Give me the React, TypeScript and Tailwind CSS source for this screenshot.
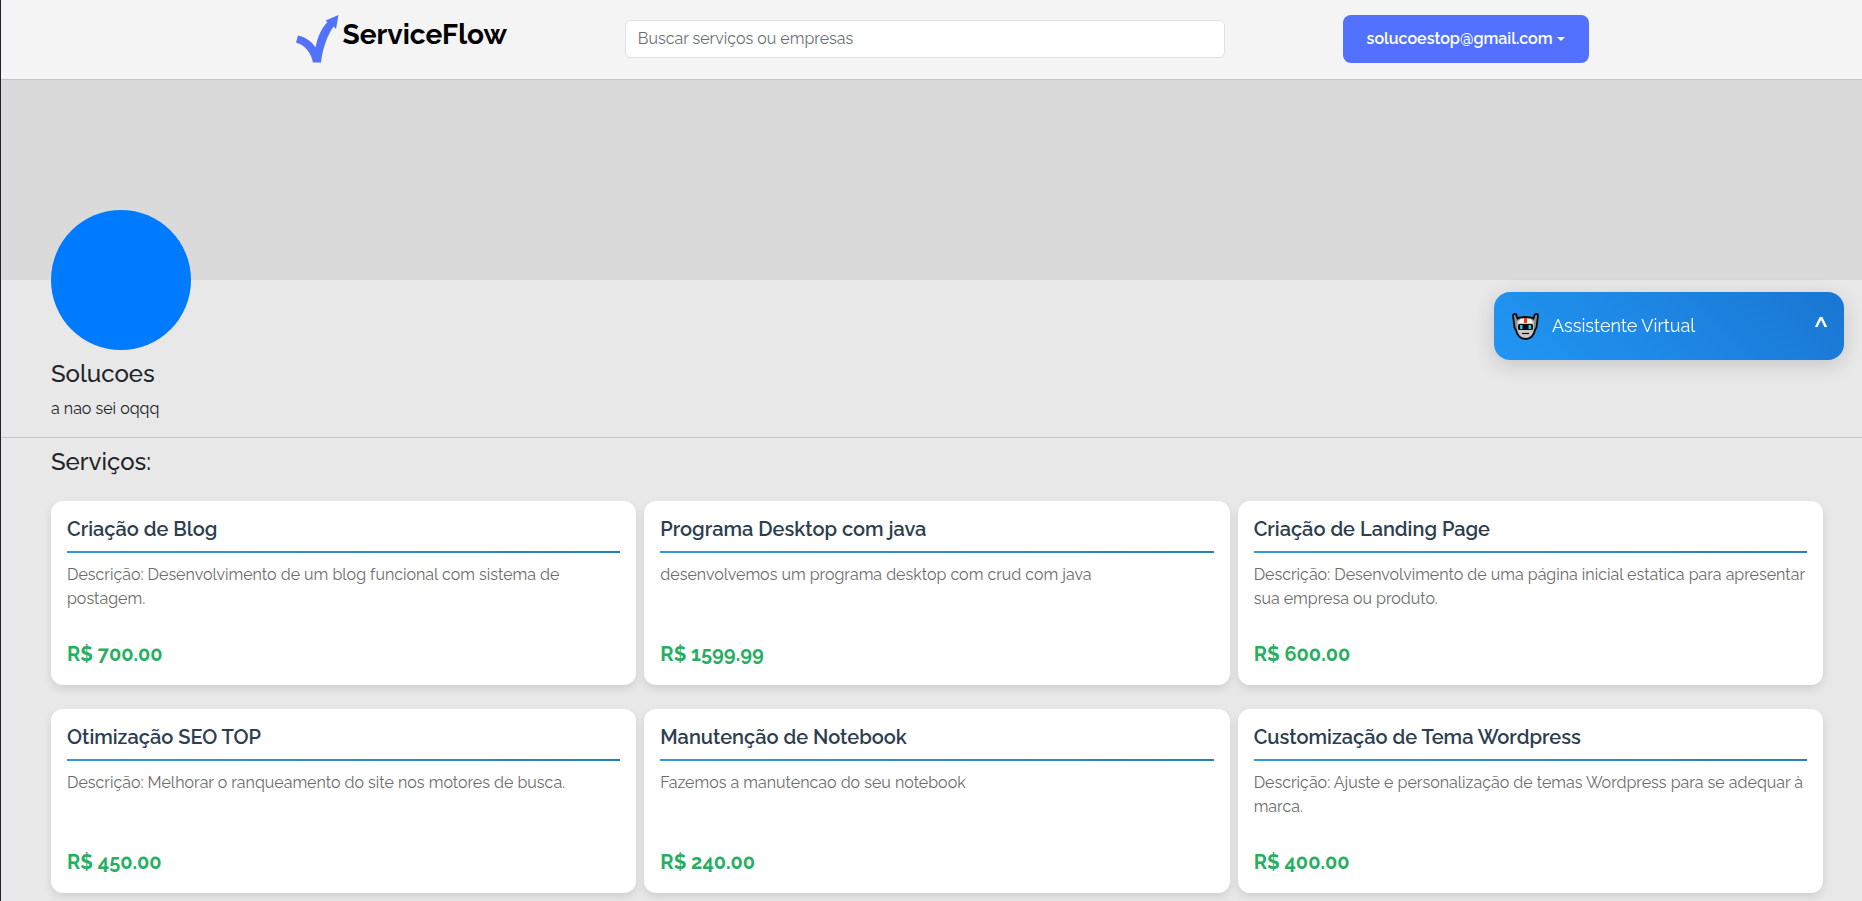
import { useState } from "react";

type Service = {
  id: number;
  name: string;
  description: string;
  price: string;
};

const services: Service[] = [
  {
    id: 1,
    name: "Criação de Blog",
    description: "Descrição: Desenvolvimento de um blog funcional com sistema de postagem.",
    price: "700.00",
  },
  {
    id: 2,
    name: "Programa Desktop com java",
    description: "desenvolvemos um programa desktop com crud com java",
    price: "1599.99",
  },
  {
    id: 3,
    name: "Criação de Landing Page",
    description:
      "Descrição: Desenvolvimento de uma página inicial estatica para apresentar sua empresa ou produto.",
    price: "600.00",
  },
  {
    id: 4,
    name: "Otimização SEO TOP",
    description: "Descrição: Melhorar o ranqueamento do site nos motores de busca.",
    price: "450.00",
  },
  {
    id: 5,
    name: "Manutenção de Notebook",
    description: "Fazemos a manutencao do seu notebook",
    price: "240.00",
  },
  {
    id: 6,
    name: "Customização de Tema Wordpress",
    description:
      "Descrição: Ajuste e personalização de temas Wordpress para se adequar à marca.",
    price: "400.00",
  },
];

function LogoMark() {
  return (
    <svg viewBox="0 0 43 48" className="h-12 w-[43px]" fill="#5271ff" aria-hidden="true">
      <path d="M2 20.500C9 22 15.500 26 19.500 32.500C21.500 22 25.500 13 31.500 7L29.500 5.500L42.500 0L40 14L37.700 11.500C32 19 26.500 33 25 47.500H17C15 37.500 9 30 0 27.500Z" />
    </svg>
  );
}

function RobotIcon() {
  return (
    <svg viewBox="0 0 27 27" className="size-[27px]" aria-hidden="true">
      <path
        d="M1 2.500C1 .5 4.500 .5 4.500 2.500L5.500 5.500C8 3.500 19 3.500 21.500 5.500L22.500 2.500C22.500 .5 26 .5 26 2.500L24.500 14.500L23 17C22 23 18 26 13.500 26S5 23 4 17L2.500 14.500Z"
        fill="#8d8d8d"
        stroke="#0b0b0b"
        strokeWidth="1.800"
      />
      <path d="M5 9C7 4.500 20 4.500 22 9L21.500 17C20.500 22 17 24.800 13.500 24.800S6.500 22 5.500 17Z" fill="#c9c9c9" />
      <path d="M8 6.500C10 5.300 17 5.300 19 6.500L20.500 10H6.500Z" fill="#f7f7f7" />
      <path d="M12 5h3v5h-3z" fill="#f03a17" />
      <rect x="6" y="11" width="15" height="6" rx="1.500" fill="#0b0b0b" />
      <path d="M8 12h2.500v4H8zM16.500 12H19v4h-2.500z" fill="#20c4ee" />
      <path d="M10 20.500h7" stroke="#0b0b0b" strokeWidth="1.200" />
    </svg>
  );
}

function Header() {
  return (
    <header className="border-b border-[#c6c6c6] bg-[#f4f4f4]">
      <div className="mx-auto flex h-[79px] max-w-[1320px] items-center justify-between pr-[3px] pb-0.5 pl-6">
        <a href="#" className="flex gap-1">
          <LogoMark />
          <span className="text-[28px] leading-10 font-bold text-black">ServiceFlow</span>
        </a>
        <input
          type="search"
          aria-label="Buscar serviços ou empresas"
          placeholder="Buscar serviços ou empresas"
          className="h-[38px] w-[600px] rounded-md border border-[#dee2e6] bg-white px-3 text-base text-[#212529] placeholder:text-[#6b6f73]"
        />
        <button
          type="button"
          className="flex h-12 items-center gap-1 rounded-lg bg-[#5271ff] px-6 text-base font-semibold text-white"
        >
          solucoestop@gmail.com
          <svg viewBox="0 0 8 4" className="h-1 w-2" fill="currentColor" aria-hidden="true">
            <path d="M0 0h8L4 4z" />
          </svg>
        </button>
      </div>
    </header>
  );
}

function ServiceCard({ service }: { service: Service }) {
  return (
    <article className="flex min-h-[184px] flex-col rounded-xl bg-white p-4 shadow-[0_4px_8px_rgba(0,0,0,0.1)]">
      <h3 className="text-xl leading-6 font-semibold text-[#2c3e50]">{service.name}</h3>
      <div className="mt-2.5 h-0.5 bg-linear-to-r from-[#3498db] to-[#2980b9]" />
      <p className="mt-2.5 text-base leading-6 text-[#6c6c6c]">{service.description}</p>
      <p className="mt-auto text-xl leading-[30px] font-bold text-[#27ae60]">
        R$ {service.price}
      </p>
    </article>
  );
}

function Assistant() {
  const [open, setOpen] = useState(false);

  return (
    <button
      type="button"
      aria-expanded={open}
      onClick={() => setOpen(!open)}
      className="fixed top-[292px] right-[18px] flex h-[68px] w-[350px] items-center rounded-2xl bg-[linear-gradient(45deg,#2196f3,#1976d2)] pr-4 pl-[18px] text-white shadow-[0_5px_20px_rgba(0,0,0,0.15)]"
    >
      <RobotIcon />
      <span className="ml-[13px] text-lg">Assistente Virtual</span>
      <span className="ml-auto text-2xl font-bold">^</span>
    </button>
  );
}

export default function App() {
  return (
    <div className="min-h-screen border-l border-[#23222c] bg-[#e8e8e8] pb-2 font-[Raleway,Lato,sans-serif] text-[#212529]">
      <Header />
      <div className="h-[200px] bg-[#dadada]" />
      <section className="border-b border-[#c6c6c6] px-[50px] pb-4">
        <div className="relative -mt-[70px] size-[140px] rounded-full bg-[#007bff]" />
        <h1 className="mt-2 text-2xl leading-8 font-medium">Solucoes</h1>
        <p className="mt-[7px] text-base leading-6">a nao sei oqqq</p>
      </section>
      <main className="pr-[39px] pl-[50px]">
        <h2 className="pt-2 text-2xl leading-8 font-medium">Serviços:</h2>
        <div className="mt-[23px] grid grid-cols-3 gap-x-2 gap-y-6">
          {services.map((service) => (
            <ServiceCard key={service.id} service={service} />
          ))}
        </div>
      </main>
      <Assistant />
    </div>
  );
}
